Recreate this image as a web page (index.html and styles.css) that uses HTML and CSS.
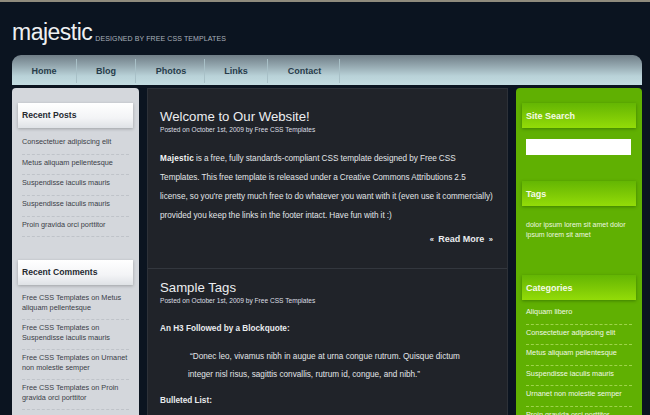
FILE: index.html
```html
<!DOCTYPE html>
<html>
<head>
<meta charset="utf-8">
<link rel="stylesheet" href="styles.css">
</head>
<body>
<div class="topline"></div>
<div class="wrap">
  <div class="header">
    <span class="logo">majestic</span>
    <span class="tagline">DESIGNED BY FREE CSS TEMPLATES</span>
  </div>
  <div class="menu">
    <a class="mi mi-home">Home</a>
    <a class="mi mi-blog">Blog</a>
    <a class="mi mi-photos">Photos</a>
    <a class="mi mi-links">Links</a>
    <a class="mi mi-contact">Contact</a>
  </div>
  <div class="cols">
    <div class="left">
      <div class="box">
        <h2 class="lhead">Recent Posts</h2>
        <ul class="llist">
          <li>Consectetuer adipiscing elit</li>
          <li>Metus aliquam pellentesque</li>
          <li>Suspendisse iaculis mauris</li>
          <li>Suspendisse iaculis mauris</li>
          <li>Proin gravida orci porttitor</li>
        </ul>
      </div>
      <div class="box">
        <h2 class="lhead">Recent Comments</h2>
        <ul class="llist two">
          <li>Free CSS Templates on Metus aliquam pellentesque</li>
          <li>Free CSS Templates on Suspendisse iaculis mauris</li>
          <li>Free CSS Templates on Urnanet non molestie semper</li>
          <li>Free CSS Templates on Proin gravida orci porttitor</li>
        </ul>
      </div>
    </div>
    <div class="main">
      <div class="post">
        <h1 class="ptitle">Welcome to Our Website!</h1>
        <p class="meta">Posted on October 1st, 2009 by Free CSS Templates</p>
        <p class="text"><b>Majestic</b> is a free, fully standards-compliant CSS template designed by Free CSS Templates. This free template is released under a Creative Commons Attributions 2.5 license, so you're pretty much free to do whatever you want with it (even use it commercially) provided you keep the links in the footer intact. Have fun with it :)</p>
        <p class="more"><span class="q">«</span> Read More <span class="q">»</span></p>
      </div>
      <div class="post second">
        <h1 class="ptitle">Sample Tags</h1>
        <p class="meta">Posted on October 1st, 2009 by Free CSS Templates</p>
        <h3 class="h3">An H3 Followed by a Blockquote:</h3>
        <blockquote class="bq">“Donec leo, vivamus nibh in augue at urna congue rutrum. Quisque dictum integer nisl risus, sagittis convallis, rutrum id, congue, and nibh.”</blockquote>
        <h3 class="h3">Bulleted List:</h3>
      </div>
    </div>
    <div class="right">
      <h2 class="rhead">Site Search</h2>
      <div class="search"><input class="sinput" type="text"></div>
      <h2 class="rhead">Tags</h2>
      <p class="tags">dolor ipsum lorem sit amet dolor ipsum lorem sit amet</p>
      <h2 class="rhead cat">Categories</h2>
      <ul class="rlist">
        <li>Aliquam libero</li>
        <li>Consectetuer adipiscing elit</li>
        <li>Metus aliquam pellentesque</li>
        <li>Suspendisse iaculis mauris</li>
        <li>Urnanet non molestie semper</li>
        <li>Proin gravida orci porttitor</li>
      </ul>
    </div>
  </div>
</div>
</body>
</html>
```
FILE: styles.css
```css
html, body {
  margin: 0;
  padding: 0;
  height: 415px;
  overflow: hidden;
}
body {
  background: #0b1420;
  font-family: "Liberation Sans", Arial, sans-serif;
}
.topline {
  height: 2px;
  background: #8f8b7d;
}
.wrap {
  width: 630px;
  margin-left: 12px;
}
.header {
  height: 53px;
  display: flex;
  align-items: flex-end;
  box-sizing: border-box;
  padding-bottom: 11px;
}
.logo {
  font-size: 23px;
  color: #eef0f2;
  letter-spacing: -0.5px;
  line-height: 1;
}
.tagline {
  font-size: 7px;
  color: #a9b1ba;
  margin-left: 3px;
  margin-bottom: 2px;
  letter-spacing: 0.1px;
}
.menu {
  height: 30px;
  border-radius: 9px 9px 0 0;
  background: linear-gradient(#6f7d86 0%, #93a6ae 35%, #b9d2d8 70%, #c3dce1 100%);
  display: flex;
  align-items: center;
}
.mi {
  font-size: 9px;
  font-weight: bold;
  color: #273c4a;
  text-align: center;
  height: 24px;
  line-height: 24px;
  margin-top: 2px;
  border-right: 1px solid #a8c0c7;
  box-sizing: border-box;
}
.mi-home { width: 65px; }
.mi-blog { width: 59px; }
.mi-photos { width: 69px; padding-left: 2px; }
.mi-links { width: 63px; }
.mi-contact { width: 72px; padding-left: 2px; }
.cols {
  display: flex;
  gap: 8px;
  margin-top: 3px;
  align-items: flex-start;
}
.left {
  width: 127px;
  height: 340px;
  background: #d4d7dc;
  border-radius: 4px 4px 0 0;
  box-sizing: border-box;
  padding: 15px 6px 0 6px;
}
.box { margin-bottom: 23px; }
.lhead {
  margin: 0;
  height: 25px;
  line-height: 25px;
  padding-left: 4px;
  font-size: 8.6px;
  color: #252a30;
  background: linear-gradient(#ffffff 0%, #f3f4f6 60%, #dfe2e6 100%);
  box-shadow: 0 1px 3px rgba(0,0,0,0.25);
}
.llist {
  list-style: none;
  margin: 6px 0 0 0;
  padding: 0 4px;
}
.llist li {
  font-size: 7.3px;
  color: #3b4047;
  height: 20.7px;
  line-height: 15px;
  border-bottom: 1px dashed #bfc3c9;
  box-sizing: border-box;
}
.llist.two { margin-top: 5px; }
.llist.two li {
  height: auto;
  line-height: 10px;
  padding: 3px 0 6px 0;
  white-space: normal;
}
.main {
  width: 361px;
  height: 340px;
  background: #202329;
  border: 1px solid #2d3138;
  border-bottom: none;
  box-sizing: border-box;
}
.post {
  padding: 19px 12px 0 12px;
  height: 180px;
  box-sizing: border-box;
  border-bottom: 1px solid #33373e;
}
.post.second {
  height: auto;
  border-bottom: none;
  padding-top: 10px;
}
.ptitle {
  margin: 0;
  font-size: 13.2px;
  font-weight: normal;
  color: #eceef0;
  line-height: 17px;
}
.meta {
  margin: 0;
  font-size: 6.6px;
  color: #dcdfe3;
  line-height: 9px;
}
.text {
  margin: 15px 0 0 0;
  font-size: 8.2px;
  word-spacing: -0.2px;
  line-height: 19px;
  color: #e2e5e8;
}
.text b { color: #f4f5f6; letter-spacing: 0.2px; }
.more {
  margin: 9px 0 0 0;
  text-align: right;
  font-size: 9px;
  font-weight: bold;
  color: #e9ebee;
  padding-right: 0;
}
.q { font-size: 7.5px; margin: 0 2px; }
.h3 {
  margin: 18px 0 0 0;
  font-size: 8.2px;
  font-weight: bold;
  color: #e9ebee;
  line-height: 11px;
}
.bq {
  margin: 14px 10px 0 28px;
  font-size: 8.2px;
  line-height: 18px;
  color: #e2e5e8;
  text-indent: 2px;
}
.bq + .h3 { margin-top: 11px; }
.right {
  width: 126px;
  height: 340px;
  background: #60b002;
  border-radius: 4px 4px 0 0;
  box-sizing: border-box;
  padding: 15px 6px 0 6px;
}
.rhead {
  margin: 0;
  height: 25px;
  line-height: 26px;
  padding-left: 4px;
  font-size: 9px;
  color: #f4fae8;
  background: linear-gradient(#64b603 0%, #7cc805 50%, #93dc08 100%);
  box-shadow: 0 1px 3px rgba(0,40,0,0.35);
}
.search {
  padding: 11px 5px 26px 4px;
}
.sinput {
  display: block;
  width: 105px;
  height: 16px;
  border: none;
  margin: 0;
  padding: 0;
  background: #fff;
}
.tags {
  margin: 14px 0 0 0;
  padding: 0 4px;
  font-size: 7px;
  line-height: 10px;
  color: #eef7e0;
}
.cat { margin-top: 35px; }
.rlist {
  list-style: none;
  margin: 4px 0 0 0;
  padding: 0 4px;
}
.rlist li {
  font-size: 7.3px;
  color: #f1f8e6;
  height: 20.6px;
  line-height: 15px;
  border-bottom: 1px dashed #9ed44a;
  box-sizing: border-box;
}
```
